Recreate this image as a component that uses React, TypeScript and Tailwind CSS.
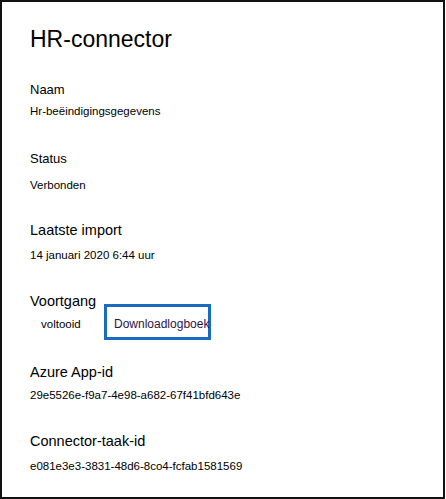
import React from "react";

const font = { fontFamily: '"Liberation Sans", Arial, sans-serif' };

export default function App() {
  return (
    <div className="w-[446px] h-[499px] bg-white" style={font}>
      <div className="box-border w-[445px] h-[499px] border-2 border-[#111] pl-[28px] pt-[23px] text-black">
        <h1 className="text-[23px] leading-[28px] font-normal">HR-connector</h1>

        <div className="mt-[26.5px] text-[13px] leading-[20px]">Naam</div>
        <div className="mt-[1.5px] text-[11.5px] leading-[20px]">Hr-beëindigingsgegevens</div>

        <div className="mt-[27.5px] text-[13px] leading-[20px]">Status</div>
        <div className="mt-[6.5px] text-[11.5px] leading-[20px]">Verbonden</div>

        <div className="mt-[25px] text-[14.5px] leading-[20px]">Laatste import</div>
        <div className="mt-[5px] text-[11.5px] leading-[20px]">14 januari 2020 6:44 uur</div>

        <div className="mt-[26px] text-[14.5px] leading-[20px]">Voortgang</div>
        <div className="-mt-[7px] flex items-baseline text-[11.5px] leading-[20px]">
          <span className="pl-[11px] w-[74px]">voltooid</span>
          <div className="box-border w-[107px] h-[36px] border-[3px] border-[#1a6cc0] pl-[7px] pt-[7px] whitespace-nowrap text-[12px] text-[#2e1446]">
            Downloadlogboek
          </div>
        </div>

        <div className="mt-[22px] text-[14.5px] leading-[20px]">Azure App-id</div>
        <div className="mt-[3px] text-[11.5px] leading-[20px]">29e5526e-f9a7-4e98-a682-67f41bfd643e</div>

        <div className="mt-[26px] text-[14.5px] leading-[20px]">Connector-taak-id</div>
        <div className="mt-[5px] text-[11.5px] leading-[20px]">e081e3e3-3831-48d6-8co4-fcfab1581569</div>
      </div>
    </div>
  );
}
